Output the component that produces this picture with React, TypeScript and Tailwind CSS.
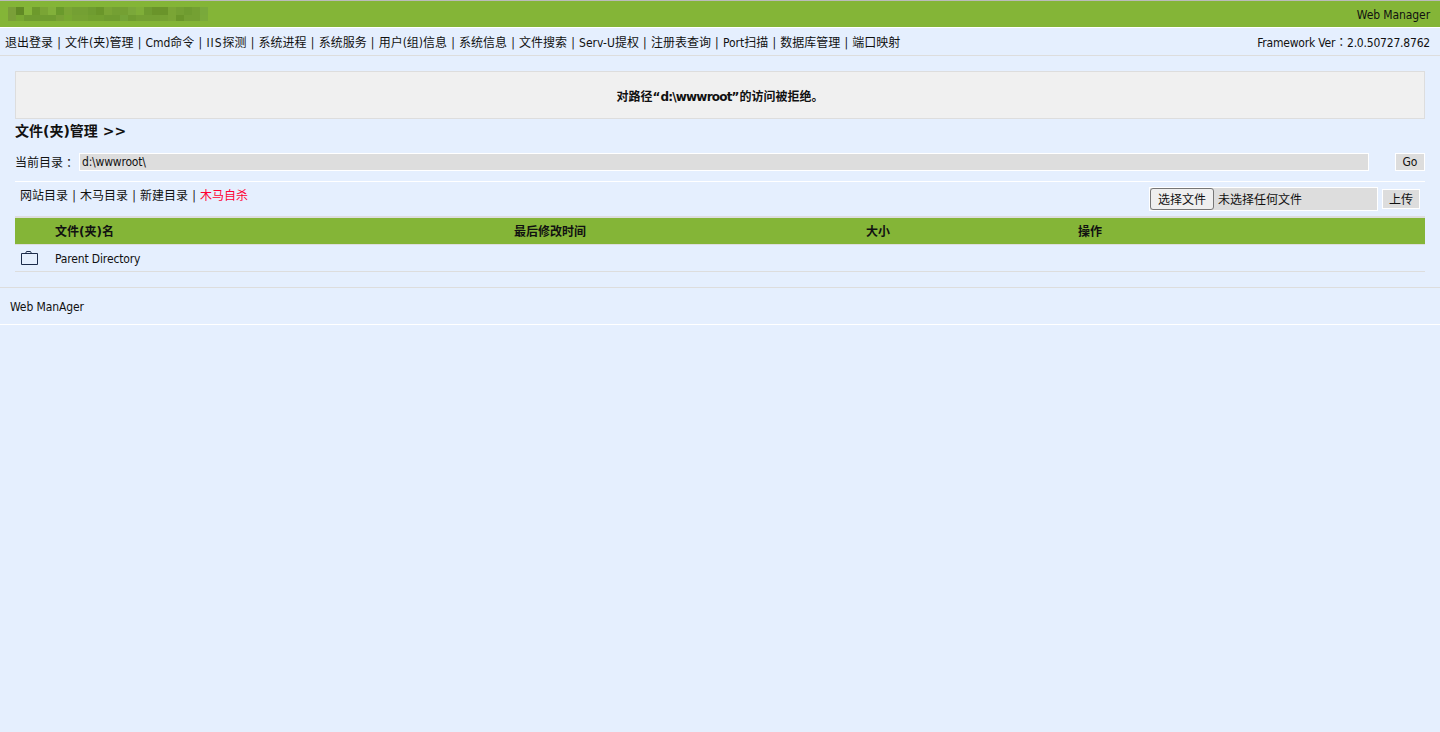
import React from 'react';

const navItems = ['退出登录', '文件(夹)管理', 'Cmd命令', 'IIS探测', '系统进程', '系统服务', '用户(组)信息', '系统信息', '文件搜索', 'Serv-U提权', '注册表查询', 'Port扫描', '数据库管理', '端口映射'];

// mosaic colours of the blurred site title, two rows of 8px cells
const mosaicTop = ['#7a9f38', '#618a25', '#85b53a', '#6d9a2c', '#7aa535', '#82b03a', '#6a9a2c', '#7aa535', '#74a033', '#74a033', '#6f9c30', '#6a962a', '#7aa535', '#74a033', '#74a033', '#7ba83a', '#7fae38', '#6f9c30', '#6a942a', '#6a942a', '#7aa535', '#74a033', '#6f9c30', '#74a033', '#79a93b'];
const mosaicBottom = ['#7a9f38', '#78a832', '#6f9c30', '#6f9c30', '#6f9c30', '#6f9c30', '#78a135', '#78a832', '#76a233', '#76a233', '#72a030', '#72a030', '#6f9c30', '#6f9c30', '#74a438', '#6f9c30', '#74a033', '#74a033', '#74a033', '#76a233', '#7aa535', '#6a962a', '#74a033', '#74a033', '#7aaa3a'];

const Sep = () => <span className="w-[12px] text-center">|</span>;

const App: React.FC = () => {
  return (
    <div className="min-h-[732px] bg-[#e5effe] text-[12px] leading-none text-[#111] font-['DejaVu_Sans_Condensed','Noto_Sans_CJK_SC',sans-serif]">
      <div className="h-[28px] border-t border-t-[#bbbbbb] border-b border-b-white bg-[#84b537] flex items-center justify-between pl-[8px] pr-[10px]">
        <div>
          <div className="flex h-[8px]">
            {mosaicTop.map((c, i) => (
              <div key={i} className="w-[8px] h-full" style={{ backgroundColor: c }} />
            ))}
          </div>
          <div className="flex h-[6px]">
            {mosaicBottom.map((c, i) => (
              <div key={i} className="w-[8px] h-full" style={{ backgroundColor: c }} />
            ))}
          </div>
        </div>
        <span className="pt-[2px] tracking-[-0.1px]">Web Manager</span>
      </div>

      <div className="h-[28px] border-b border-b-[#dddddd] flex items-center justify-between pl-[5px] pr-[10px] pt-[2px]">
        <div className="flex whitespace-pre">
          {navItems.map((item, i) => (
            <React.Fragment key={item}>
              {i > 0 && <Sep />}
              {item === 'IIS探测' ? (
                <span><span className="tracking-[1px]">IIS</span>探测</span>
              ) : (
                <span>{item}</span>
              )}
            </React.Fragment>
          ))}
        </div>
        <span className="tracking-[-0.2px]">Framework Ver<span className="font-['Noto_Sans_CJK_TC']">：</span>2.0.50727.8762</span>
      </div>

      <div className="px-[15px] pt-[15px]">
        <div className="h-[48px] pt-[4px] border border-[#dddddd] bg-[#f0f0f0] flex items-center justify-center font-bold font-['DejaVu_Sans','Noto_Sans_CJK_SC',sans-serif]">
          <span>对路径“<span className="tracking-[-0.8px]">d:\wwwroot</span>”的访问被拒绝。</span>
        </div>
        <h2 className="mt-[5px] h-[15px] text-[14px] font-bold font-['DejaVu_Sans','Noto_Sans_CJK_SC',sans-serif]">文件(夹)管理 &gt;&gt;</h2>

        <div className="mt-[14px] h-[29px] border-b border-b-white flex items-start">
          <span className="w-[64px] h-[18px] pt-[2px] flex items-center">当前目录<span className="font-['Noto_Sans_CJK_TC']">：</span></span>
          <div className="w-[1290px] h-[18px] border border-white bg-[#dddddd] flex items-center px-[2px] tracking-[-0.2px]">d:\wwwroot\</div>
          <div className="ml-[26px] w-[30px] h-[18px] border border-white bg-[#dddddd] flex items-center justify-center">Go</div>
        </div>

        <div className="h-[34px] flex items-start justify-between pl-[5px] pr-[5px]">
          <div className="mt-[8px] flex whitespace-pre">
            <span>网站目录</span><Sep /><span>木马目录</span><Sep /><span>新建目录</span><Sep /><span className="text-[#ff0033]">木马自杀</span>
          </div>
          <div className="mt-[5px] flex items-start">
            <div className="w-[229px] h-[24px] border border-white bg-[#dddddd] flex items-center">
              <span className="w-[64px] h-[22px] pt-[2px] border border-[#767676] rounded-[3px] bg-[#efefef] flex items-center justify-center">选择文件</span>
              <span className="ml-[4px] pt-[2px]">未选择任何文件</span>
            </div>
            <div className="ml-[4px] mt-[2px] w-[38px] h-[20px] pt-[2px] border border-white bg-[#dddddd] flex items-center justify-center">上传</div>
          </div>
        </div>

        <div className="h-[29px] pt-[2px] border-t-2 border-t-[#dddddd] border-b border-b-[#dddddd] bg-[#84b537] flex items-center font-bold font-['DejaVu_Sans','Noto_Sans_CJK_SC',sans-serif]">
          <span className="ml-[40px] w-[459px]">文件(夹)名</span>
          <span className="w-[352px]">最后修改时间</span>
          <span className="w-[212px]">大小</span>
          <span>操作</span>
        </div>
        <div className="h-[27px] border-b border-b-[#dddddd] flex items-center">
          <svg className="ml-[6px] w-[18px] h-[14px]" viewBox="0 0 18 14" fill="none" stroke="#1c2b4a" strokeWidth="1">
            <path d="M0.5 13.5V2.5H16.5V13.5ZM4.5 2.5L5.5 0.5H9.5L10.5 2.5" />
          </svg>
          <span className="ml-[16px] pt-[2px] tracking-[-0.15px]">Parent Directory</span>
        </div>
      </div>

      <div className="mt-[15px] h-[38px] pt-[2px] border-t border-t-[#dddddd] border-b border-b-white flex items-center pl-[10px] tracking-[-0.1px]">Web ManAger</div>
    </div>
  );
};

export default App;
